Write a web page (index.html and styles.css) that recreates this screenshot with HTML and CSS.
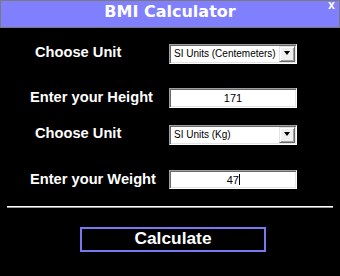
FILE: index.html
```html
<!DOCTYPE html>
<html>
<head>
<meta charset="utf-8">
<title>BMI Calculator</title>
<link rel="stylesheet" href="styles.css">
</head>
<body>
<div class="window">
  <div class="titlebar">
    <span class="spacer"></span>
    <span class="title">BMI Calculator</span>
    <span class="close">X</span>
  </div>
  <div class="form">
    <div class="row r1">
      <span class="label indent-wide">Choose Unit</span>
      <div class="combo"><span class="combo-text">SI Units (Centemeters)</span><span class="drop"><span class="arrow"></span></span></div>
    </div>
    <div class="row r2">
      <span class="label">Enter your Height</span>
      <div class="textbox">171</div>
    </div>
    <div class="row r3">
      <span class="label indent-wide">Choose Unit</span>
      <div class="combo"><span class="combo-text">SI Units (Kg)</span><span class="drop"><span class="arrow"></span></span></div>
    </div>
    <div class="row r4">
      <span class="label">Enter your Weight</span>
      <div class="textbox short">47<span class="caret"></span></div>
    </div>
  </div>
  <div class="sep"></div>
  <div class="actions">
    <button class="calc">Calculate</button>
  </div>
</div>
</body>
</html>
```
FILE: styles.css
```css
html, body {
  margin: 0;
  padding: 0;
  background: #000;
}
.window {
  width: 340px;
  height: 276px;
  background: #000;
  font-family: "Liberation Sans", Arial, sans-serif;
  overflow: hidden;
}
.titlebar {
  box-sizing: border-box;
  height: 28px;
  background: #8080ff;
  border: 1px solid #7a7a7a;
  display: grid;
  grid-template-columns: 1fr auto 1fr;
  align-items: start;
}
.title {
  font-family: "DejaVu Sans", Verdana, sans-serif;
  font-weight: bold;
  font-size: 16px;
  line-height: 18px;
  padding-top: 2px;
  color: #fff;
}
.close {
  justify-self: end;
  font-family: "DejaVu Sans", Verdana, sans-serif;
  font-weight: bold;
  font-size: 9px;
  line-height: 10px;
  color: #fff;
  padding-right: 4px;
}
.form {
  display: flex;
  flex-direction: column;
  padding-top: 16px;
}
.row {
  display: grid;
  grid-template-columns: 169px 128px;
  align-items: start;
}
.r2 { margin-top: 24px; }
.r3 { margin-top: 17px; }
.r4 { margin-top: 25px; }
.label {
  color: #fff;
  font-weight: bold;
  font-size: 14.67px;
  line-height: 16px;
  padding-left: 30px;
  white-space: nowrap;
}
.label.indent-wide { padding-left: 35px; }
.r2 .label, .r4 .label { line-height: 18px; }
.combo, .textbox {
  box-sizing: border-box;
  height: 20px;
  background: #fff;
  border: 1px solid;
  border-color: #a0a0a0 #fff #fff #a0a0a0;
  box-shadow: inset 1px 1px 0 #696969, inset -1px -1px 0 #e3e3e3;
  color: #000;
}
.combo {
  display: flex;
  align-items: center;
  padding: 1px 1px 1px 4px;
}
.combo-text {
  flex: 1;
  font-size: 10px;
  line-height: 12px;
  white-space: nowrap;
  overflow: hidden;
}
.drop {
  box-sizing: border-box;
  width: 16px;
  height: 16px;
  background: #f0f0f0;
  border: 1px solid;
  border-color: #e3e3e3 #696969 #696969 #e3e3e3;
  box-shadow: inset 1px 1px 0 #fff, inset -1px -1px 0 #a0a0a0;
  display: flex;
  align-items: center;
  justify-content: center;
}
.arrow {
  width: 0;
  height: 0;
  border-left: 3.5px solid transparent;
  border-right: 3.5px solid transparent;
  border-top: 4px solid #000;
  margin-top: -2px;
}
.textbox {
  display: flex;
  align-items: center;
  justify-content: center;
  font-size: 11px;
  line-height: 12px;
}
.textbox.short { height: 19px; }
.caret {
  display: inline-block;
  width: 0;
  height: 11px;
  border-left: 1px solid #000;
  margin-right: -1px;
  margin-left: 0.5px;
}
.sep {
  margin: 17px 7px 0;
  height: 0;
  border-top: 1px solid #fff;
  border-bottom: 1px solid #9a9a9a;
}
.actions {
  padding: 19px 0 0 80px;
}
.calc {
  box-sizing: border-box;
  width: 186px;
  height: 25px;
  margin: 0;
  padding: 0 0 3px;
  background: #000;
  border: 2px solid #7878f0;
  color: #fff;
  font-family: "Liberation Sans", Arial, sans-serif;
  font-weight: bold;
  font-size: 17.33px;
  line-height: 18px;
}
```
